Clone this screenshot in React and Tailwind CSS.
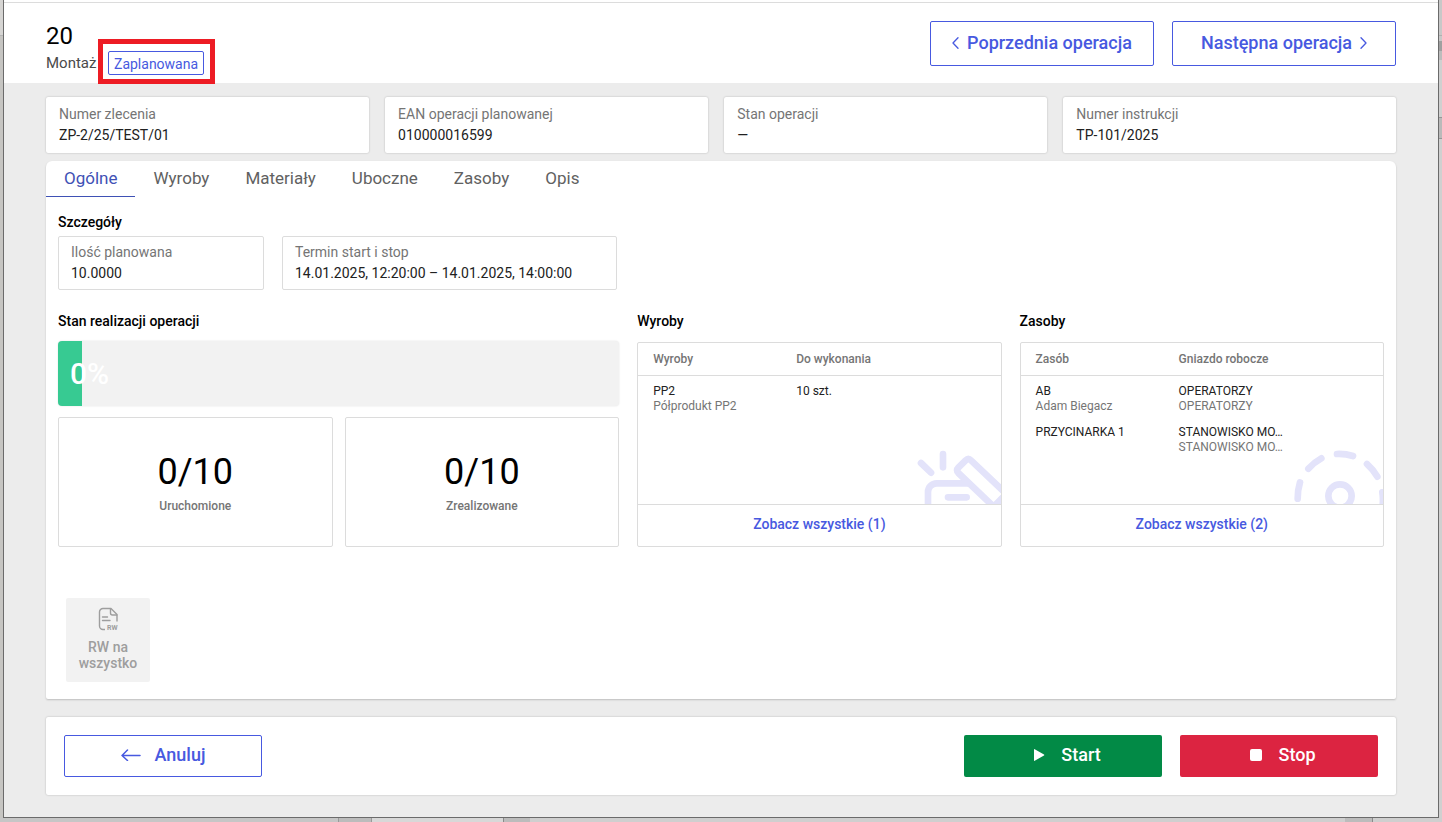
const TABS = ['Ogólne', 'Wyroby', 'Materiały', 'Uboczne', 'Zasoby', 'Opis']

const INFO = [
  { label: 'Numer zlecenia', value: 'ZP-2/25/TEST/01' },
  { label: 'EAN operacji planowanej', value: '010000016599' },
  { label: 'Stan operacji', value: '—' },
  { label: 'Numer instrukcji', value: 'TP-101/2025' },
]

const STATS = [
  { value: '0/10', label: 'Uruchomione' },
  { value: '0/10', label: 'Zrealizowane' },
]

const PRODUCTS = [[['PP2', 'Półprodukt PP2'], ['10 szt.']]]

const RESOURCES = [
  [['AB', 'Adam Biegacz'], ['OPERATORZY', 'OPERATORZY']],
  [['PRZYCINARKA 1'], ['STANOWISKO MO…', 'STANOWISKO MO…']],
]

function Field({ label, value }) {
  return (
    <dl className="text-sm">
      <dt className="leading-5 text-[#757575]">{label}</dt>
      <dd className="leading-[22px] text-[#212121]">{value}</dd>
    </dl>
  )
}

function Chevron({ d }) {
  return (
    <svg className="h-3 w-[7px]" viewBox="0 0 7 12" fill="none" stroke="currentColor" strokeWidth="1.3" strokeLinecap="round" strokeLinejoin="round">
      <path d={d} />
    </svg>
  )
}

function ProductIcon() {
  return (
    <svg
      className="absolute right-0 bottom-0 h-[54px] w-[84px]"
      viewBox="50 30 252 162"
      fill="none"
      stroke="#e3e3fa"
      strokeWidth="20"
      strokeLinecap="round"
      strokeLinejoin="round"
    >
      <path d="M62 69l30 29M128 42v40M143 172h56" />
      <path d="M83 205v-49a26 26 0 0 1 26-26h100" />
      <path d="M280 200L174 99q-8-8 0-16l22-22q8-8 16 0l106 101z" fill="#fff" />
    </svg>
  )
}

function ResourceIcon() {
  return (
    <svg
      className="absolute right-0 bottom-0 h-[54px] w-[90px]"
      viewBox="40 30 270 162"
      fill="none"
      stroke="#e3e3fa"
      strokeWidth="20"
      strokeLinecap="round"
    >
      <circle cx="181" cy="168" r="35" />
      <path d="M54 176q0-26 7-49M86 86q17-19 39-31M172 42q25-1 48 6M262 72q19 17 31 38M308 157q3 17 1 40" />
    </svg>
  )
}

function RwIcon() {
  return (
    <svg className="size-6" viewBox="0 0 24 24" fill="none" stroke="#9e9e9e" strokeWidth="1.4" strokeLinejoin="round">
      <path d="M9 22.500H7a3.500 3.500 0 0 1-3.500-3.500V5A3.500 3.500 0 0 1 7 1.500h8l6 6v7" />
      <path d="M14.500 1.700v4.300a2 2 0 0 0 2 2h4.300M6.500 10h5M6.500 13.500h7.500" strokeLinecap="round" />
      <text x="11" y="22.500" fill="#9e9e9e" stroke="none" fontSize="7" fontWeight="700">
        RW
      </text>
    </svg>
  )
}

function TableCard({ title, columns, rows, icon, total }) {
  return (
    <section>
      <h2 className="text-sm leading-5 font-medium text-black">{title}</h2>
      <div className="mt-[11px] flex h-[205px] flex-col rounded-xs border border-[#dcdcdc]">
        <div className="relative flex-1 overflow-hidden">
          {icon}
          <table className="relative w-full table-fixed text-left text-xs">
            <thead>
              <tr className="h-8 border-b border-[#dcdcdc] text-[#757575]">
                <th className="w-[158px] pl-[15px] font-medium">{columns[0]}</th>
                <th className="font-medium">{columns[1]}</th>
              </tr>
            </thead>
            <tbody>
              {rows.map((row) => (
                <tr key={row[0][0]} className="h-[42px] align-top leading-[15px] text-[#212121]">
                  {row.map(([name, sub], i) => (
                    <td key={i} className={i === 0 ? 'pt-2 pl-[15px]' : 'pt-2'}>
                      {name}
                      {sub && <span className="block text-[#757575]">{sub}</span>}
                    </td>
                  ))}
                </tr>
              ))}
            </tbody>
          </table>
        </div>
        <button type="button" className="h-[42px] border-t border-[#dcdcdc] pb-1 text-sm font-medium text-[#4759e0]">
          Zobacz wszystkie ({total})
        </button>
      </div>
    </section>
  )
}

function Header() {
  return (
    <header className="flex justify-between border-t border-[#dcdcdc] bg-white px-[42px] pt-[18px] pb-2">
      <div>
        <h1 className="text-2xl leading-[30px] text-black">20</h1>
        <div className="flex items-center text-[15px] leading-6 text-[#4a4a4a]">
          <span className="w-[62px]">Montaż</span>
          <span className="relative rounded-xs border border-[#4759e0] px-[5px] pt-0.5 text-sm leading-5 text-[#4759e0]">
            Zaplanowana
            <span className="pointer-events-none absolute -top-[13px] -right-3 -bottom-[10px] -left-[11px] border-5 border-[#ed1c24]" />
          </span>
        </div>
      </div>
      <nav className="flex gap-[18px]">
        <button
          type="button"
          className="flex h-[45px] w-56 items-center justify-center gap-2 rounded-xs border border-[#4759e0] pb-0.5 text-lg font-medium text-[#4759e0]"
        >
          <Chevron d="M6 .700L1 6l5 5.300" />
          Poprzednia operacja
        </button>
        <button
          type="button"
          className="flex h-[45px] w-56 items-center justify-center gap-2 rounded-xs border border-[#4759e0] pb-0.5 text-lg font-medium text-[#4759e0]"
        >
          Następna operacja
          <Chevron d="M1 .700L6 6l-5 5.300" />
        </button>
      </nav>
    </header>
  )
}

function Progress({ percent }) {
  return (
    <div className="relative mt-[10px] h-[65px] overflow-hidden rounded-sm bg-[#f2f2f2] shadow-[0_0_2px_rgba(0,0,0,0.12)]">
      <div className="absolute inset-y-0 left-0 min-w-6 bg-[#37ca92]" style={{ width: `${percent}%` }} />
      <span className="relative flex h-full items-center pl-3 text-[30px] font-medium text-white">{percent}%</span>
    </div>
  )
}

export default function App() {
  return (
    <div className="flex min-h-screen flex-col bg-[#c9c9c9] font-['Roboto',sans-serif]">
      <div className="flex flex-1">
        <div className="w-[3px] bg-[#c6c5c2]">
          <div className="h-9 border-b border-[#b4b4b4] bg-[#d6d5d3]" />
        </div>

        <div className="flex flex-1 flex-col border-x border-b border-[#6b6b6b] bg-[#ececec]">
          <div className="h-0.5 bg-white" />
          <Header />

          <main className="flex flex-1 flex-col px-[42px] pt-[14px] pb-[22px]">
            <div className="grid grid-cols-[34fr_34fr_34fr_35fr] gap-4">
              {INFO.map((item) => (
                <div key={item.label} className="rounded-xs bg-white px-[13px] py-[7px] shadow-[0_0_2px_rgba(0,0,0,0.25)]">
                  <Field {...item} />
                </div>
              ))}
            </div>

            <div className="mt-2 flex flex-1 flex-col rounded-t-md rounded-b-xs bg-white shadow-[0_1px_2px_rgba(0,0,0,0.2)]">
              <div role="tablist" className="flex text-[17px] text-[#616161]">
                {TABS.map((tab, i) => (
                  <button
                    key={tab}
                    type="button"
                    role="tab"
                    aria-selected={i === 0}
                    className={
                      i === 0
                        ? 'h-9 border-b border-[#3f51b5] px-[18px] text-[#3f51b5]'
                        : 'h-9 border-b border-transparent px-[18px]'
                    }
                  >
                    {tab}
                  </button>
                ))}
              </div>

              <div className="px-3 pt-[15px]">
                <h2 className="text-sm leading-5 font-medium text-black">Szczegóły</h2>
                <div className="mt-1 flex gap-[18px]">
                  <div className="w-[206px] rounded-xs border border-[#dcdcdc] px-3 py-[5px]">
                    <Field label="Ilość planowana" value="10.0000" />
                  </div>
                  <div className="w-[335px] rounded-xs border border-[#dcdcdc] px-3 py-[5px]">
                    <Field label="Termin start i stop" value="14.01.2025, 12:20:00 – 14.01.2025, 14:00:00" />
                  </div>
                </div>

                <div className="mt-[21px] grid grid-cols-[154fr_100fr_100fr] gap-[18px]">
                  <section>
                    <h2 className="text-sm leading-5 font-medium text-black">Stan realizacji operacji</h2>
                    <Progress percent={0} />
                    <div className="mt-[11px] grid grid-cols-2 gap-3">
                      {STATS.map((stat) => (
                        <div
                          key={stat.label}
                          className="flex h-[130px] flex-col items-center justify-center rounded-xs border border-[#dcdcdc] pt-0.5"
                        >
                          <span className="text-4xl text-black">{stat.value}</span>
                          <span className="mt-1.5 text-xs font-medium text-[#757575]">{stat.label}</span>
                        </div>
                      ))}
                    </div>
                  </section>
                  <TableCard
                    title="Wyroby"
                    columns={['Wyroby', 'Do wykonania']}
                    rows={PRODUCTS}
                    icon={<ProductIcon />}
                    total={1}
                  />
                  <TableCard
                    title="Zasoby"
                    columns={['Zasób', 'Gniazdo robocze']}
                    rows={RESOURCES}
                    icon={<ResourceIcon />}
                    total={2}
                  />
                </div>
              </div>

              <div className="mt-auto px-5 pt-4 pb-[17px]">
                <button
                  type="button"
                  disabled
                  className="flex size-[84px] flex-col items-center justify-center gap-2 rounded-xs bg-[#f2f2f2] pb-0.5 text-sm leading-4 font-medium text-[#9e9e9e]"
                >
                  <RwIcon />
                  RW na wszystko
                </button>
              </div>
            </div>

            <footer className="mt-[18px] flex gap-[18px] rounded-xs bg-white p-[18px] text-lg font-medium shadow-[0_0_2px_rgba(0,0,0,0.25)]">
              <button
                type="button"
                className="mr-auto flex h-[42px] w-[198px] items-center justify-center gap-[14px] rounded-xs border border-[#4759e0] pb-0.5 text-[#4759e0]"
              >
                <svg className="h-3 w-5" viewBox="0 0 20 12" fill="none" stroke="currentColor" strokeWidth="1.5" strokeLinecap="round" strokeLinejoin="round">
                  <path d="M19 6.500H1M6.500 1L1 6.500 6.500 11.500" />
                </svg>
                Anuluj
              </button>
              <button
                type="button"
                className="flex h-[42px] w-[198px] items-center justify-center gap-4 rounded-xs bg-[#028a46] pb-0.5 pl-2 text-white"
              >
                <svg className="h-3 w-3" viewBox="0 0 12 12" fill="currentColor">
                  <path d="M1 .5q0-.7.700-.3L11 5.500q.6.500 0 1L1.700 11.800q-.7.400-.7-.3z" />
                </svg>
                Start
              </button>
              <button
                type="button"
                className="flex h-[42px] w-[198px] items-center justify-center gap-4 rounded-xs bg-[#dc2441] pb-0.5 pl-2 text-white"
              >
                <span className="size-3 rounded-xs bg-white" />
                Stop
              </button>
            </footer>
          </main>
        </div>

        <div className="w-[3px] bg-[#d0d0d0]">
          <div className="h-9 border-b border-[#b0b0b0] bg-[#c8c8c8]" />
          <div className="h-[5px] bg-[#c8c8c8]" />
          <div className="h-[10px] bg-[#a0a0a0]" />
          <div className="h-[9px] bg-[#bcbcbc]" />
          <div className="mt-[57px] h-[22px] border-y border-[#969696] bg-[#bababa]" />
        </div>
      </div>

      {/* edge of the page behind the dialog */}
      <div className="flex h-1">
        <div className="w-[338px] bg-[#c6c6c6]" />
        <div className="w-[34px] border-x border-[#9a9a9a] bg-[#bcbcbc]" />
        <div className="w-[132px] border-r border-[#8a8a8a] bg-[#d8d8d8]" />
        <div className="w-[26px] bg-[#bcbcbc]" />
        <div className="flex-1 bg-[#cfcfcf]" />
        <div className="w-7 border-r border-[#8a8a8a] bg-[#bcbcbc]" />
        <div className="w-[69px] bg-[#cfcfcf]" />
      </div>
    </div>
  )
}
